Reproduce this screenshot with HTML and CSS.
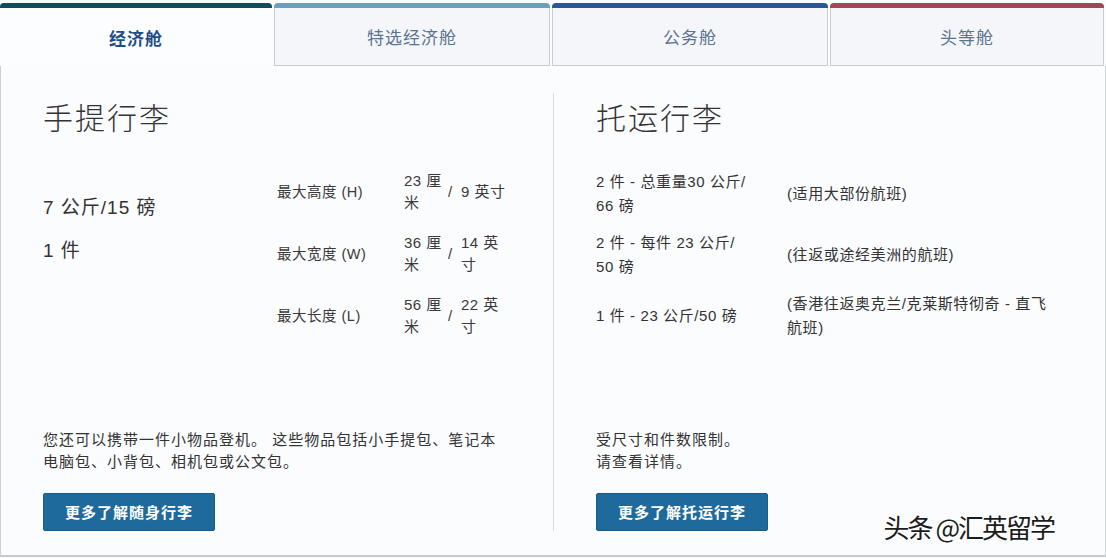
FILE: index.html
```html
<!DOCTYPE html>
<html lang="zh-CN">
<head>
<meta charset="utf-8">
<title>行李</title>
<link rel="stylesheet" href="styles.css">
</head>
<body>
<div class="page">
  <nav class="tabs">
    <div class="tab tab-economy active"><span class="tab-label">经济舱</span></div>
    <div class="tab tab-premium"><span class="tab-label">特选经济舱</span></div>
    <div class="tab tab-business"><span class="tab-label">公务舱</span></div>
    <div class="tab tab-first"><span class="tab-label">头等舱</span></div>
  </nav>
  <div class="panel">
    <section class="col col-carry">
      <h2 class="heading">手提行李</h2>
      <div class="carry-body">
        <div class="carry-weight">
          <p class="big">7 公斤/15 磅</p>
          <p class="big">1 件</p>
        </div>
        <div class="dims">
          <div class="dim-label">最大高度 (H)</div>
          <div class="dim-val">23 厘<br>米</div>
          <div class="dim-slash">/</div>
          <div class="dim-val">9 英寸</div>

          <div class="dim-label">最大宽度 (W)</div>
          <div class="dim-val">36 厘<br>米</div>
          <div class="dim-slash">/</div>
          <div class="dim-val">14 英<br>寸</div>

          <div class="dim-label">最大长度 (L)</div>
          <div class="dim-val">56 厘<br>米</div>
          <div class="dim-slash">/</div>
          <div class="dim-val">22 英<br>寸</div>
        </div>
      </div>
      <div class="foot">
        <p class="note">您还可以携带一件小物品登机。 这些物品包括小手提包、笔记本<br>电脑包、小背包、相机包或公文包。</p>
        <a class="btn">更多了解随身行李</a>
      </div>
    </section>
    <section class="col col-checked">
      <h2 class="heading">托运行李</h2>
      <div class="checked-rows">
        <div class="ck-weight">2 件 - 总重量30 公斤/<br>66 磅</div>
        <div class="ck-note">(适用大部份航班)</div>

        <div class="ck-weight">2 件 - 每件 23 公斤/<br>50 磅</div>
        <div class="ck-note">(往返或途经美洲的航班)</div>

        <div class="ck-weight">1 件 - 23 公斤/50 磅</div>
        <div class="ck-note">(香港往返奥克兰/克莱斯特彻奇 - 直飞<br>航班)</div>
      </div>
      <div class="foot">
        <p class="note">受尺寸和件数限制。<br>请查看详情。</p>
        <a class="btn">更多了解托运行李</a>
      </div>
    </section>
  </div>
  <div class="watermark">头条 @汇英留学</div>
</div>
</body>
</html>
```
FILE: styles.css
```css
* { box-sizing: border-box; }

body {
  margin: 0;
  background: #fbfcfe;
  font-family: "Liberation Sans", "Noto Sans CJK SC", sans-serif;
  color: #333;
}

.page {
  position: relative;
  width: 1106px;
  height: 558px;
  padding-top: 3px;
}

/* ---------- tabs ---------- */
.tabs {
  display: grid;
  grid-template-columns: 272px 276px 276px 274px;
  column-gap: 2px;
  height: 63px;
}

.tab {
  padding-top: 5px;
  border-radius: 4px 4px 0 0;
  display: flex;
}
.tab-economy  { background: #114b5e; }
.tab-premium  { background: #6c9ec0; }
.tab-business { background: #2b5895; }
.tab-first    { background: #a44656; }

.tab-label {
  flex: 1;
  display: flex;
  align-items: center;
  justify-content: center;
  background: #f4f6f9;
  border: 1px solid #c9cdd3;
  border-top: 0;
  font-family: "Noto Sans CJK SC", sans-serif;
  font-size: 17px;
  letter-spacing: 1px;
  color: #5b7393;
}

.active .tab-label {
  background: #fcfdfe;
  border: 0;
  color: #1f4d86;
  font-weight: 700;
}

/* ---------- panel ---------- */
.panel {
  display: grid;
  grid-template-columns: 553px 1fr;
  height: 491px;
  padding: 27px 0 24px;
  border-left: 1px solid #cdd1d6;
  border-right: 1px solid #cdd1d6;
  border-bottom: 2px solid #c6cacf;
}

.col {
  display: flex;
  flex-direction: column;
  padding: 5px 0 0 42px;
}
.col-carry { border-right: 1px solid #d6d9dd; }

.heading {
  margin: 0;
  font-family: "Noto Sans CJK SC", sans-serif;
  font-weight: 300;
  font-size: 30px;
  letter-spacing: 2px;
  line-height: 36px;
  color: #333;
}

/* carry-on */
.carry-body {
  display: flex;
  margin-top: 27px;
}

.carry-weight {
  width: 234px;
  padding-top: 34px;
}

.big {
  margin: 0 0 17px;
  font-size: 19px;
  letter-spacing: 1px;
  line-height: 26px;
  color: #333;
}

.dims {
  display: grid;
  grid-template-columns: 127px 44px 13px 52px;
  grid-auto-rows: 62px;
  align-items: center;
  font-size: 15px;
  letter-spacing: 0.5px;
  line-height: 22px;
  color: #3a3a3a;
}

.dim-label { font-size: 14.5px; }

/* checked */
.checked-rows {
  display: grid;
  grid-template-columns: 191px 1fr;
  grid-auto-rows: 61px;
  align-items: center;
  margin-top: 29px;
  font-size: 15px;
  letter-spacing: 0.6px;
  line-height: 24px;
  color: #333;
}

/* footer */
.foot {
  margin-top: auto;
  display: flex;
  flex-direction: column;
  align-items: flex-start;
}

.note {
  margin: 0 0 20px;
  font-size: 15px;
  letter-spacing: 1px;
  line-height: 22px;
  color: #333;
}

.btn {
  display: block;
  height: 38px;
  padding: 0 21px;
  line-height: 36px;
  background: #1f6a9c;
  border: 1px solid #185b88;
  border-radius: 2px;
  color: #fff;
  font-family: "Noto Sans CJK SC", sans-serif;
  font-weight: 700;
  font-size: 15px;
  letter-spacing: 1px;
}

/* watermark overlay */
.watermark {
  position: absolute;
  right: 52px;
  bottom: 16px;
  font-family: "Noto Sans CJK SC", sans-serif;
  font-size: 26px;
  line-height: 30px;
  letter-spacing: -2px;
  color: #1c1c1c;
  text-shadow: 1px 1px 0 #fff, -1px -1px 0 #fff, 1px -1px 0 #fff, -1px 1px 0 #fff;
}
```
